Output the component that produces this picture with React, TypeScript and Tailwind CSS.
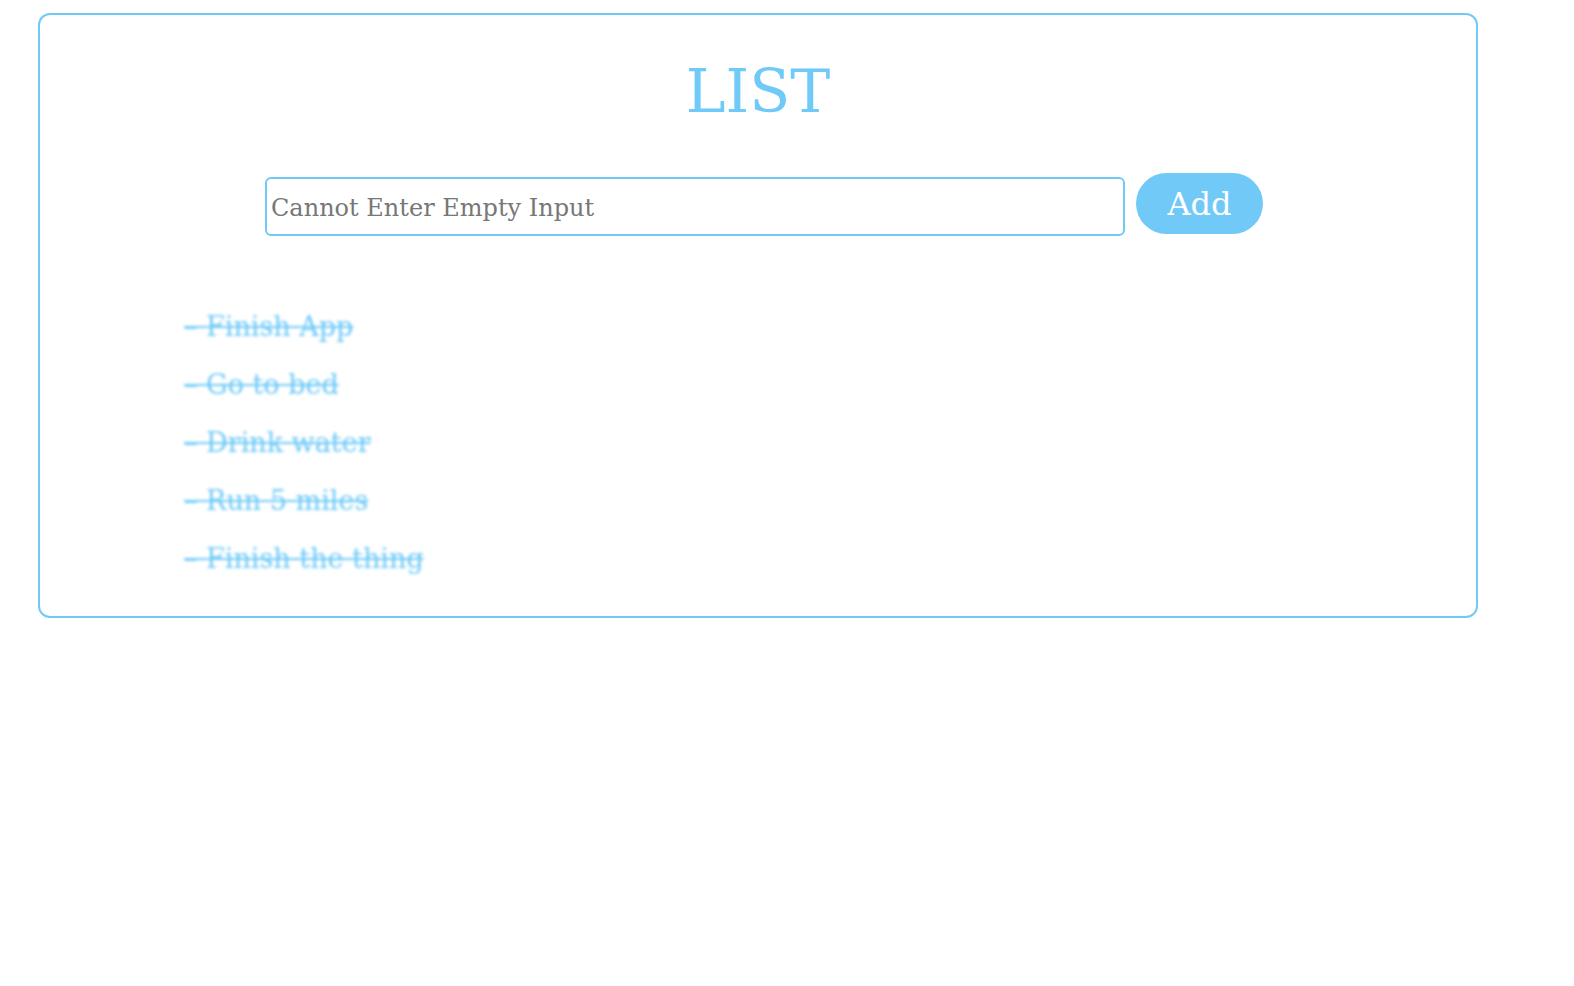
import React from "react";

const ITEMS = ["Finish App", "Go to bed", "Drink water", "Run 5 miles", "Finish the thing"];

export default function App() {
  return (
    <div className="min-h-screen bg-white font-['DejaVu_Serif',Georgia,serif]">
      <div className="ml-[38px] mt-[13px] w-[1440px] border-2 border-[#6fcaf8] rounded-[12px] pb-[39px]">
        <h1 className="text-center text-[60px] leading-none text-[#6fcaf8] mt-[46px]">LIST</h1>
        <div className="flex justify-center items-center gap-[11px] mt-[56px] pl-[12px]">
          <input
            readOnly
            placeholder="Cannot Enter Empty Input"
            className="w-[860px] h-[59px] border-2 border-[#6fcaf8] rounded-[6px] px-[4px] pt-[2px] text-[24px] text-[#777] placeholder:text-[#777] outline-none"
          />
          <button className="w-[127px] h-[61px] rounded-full bg-[#71c9f8] text-white text-[32px] leading-none -mt-[6px]">
            Add
          </button>
        </div>
        <ul className="mt-[73px] ml-[144px] flex flex-col gap-[22px]">
          {ITEMS.map((t) => (
            <li key={t} className="text-[27px] leading-[36px] text-[#6fcaf8] line-through blur-[1.5px]">
              – {t}
            </li>
          ))}
        </ul>
      </div>
    </div>
  );
}
